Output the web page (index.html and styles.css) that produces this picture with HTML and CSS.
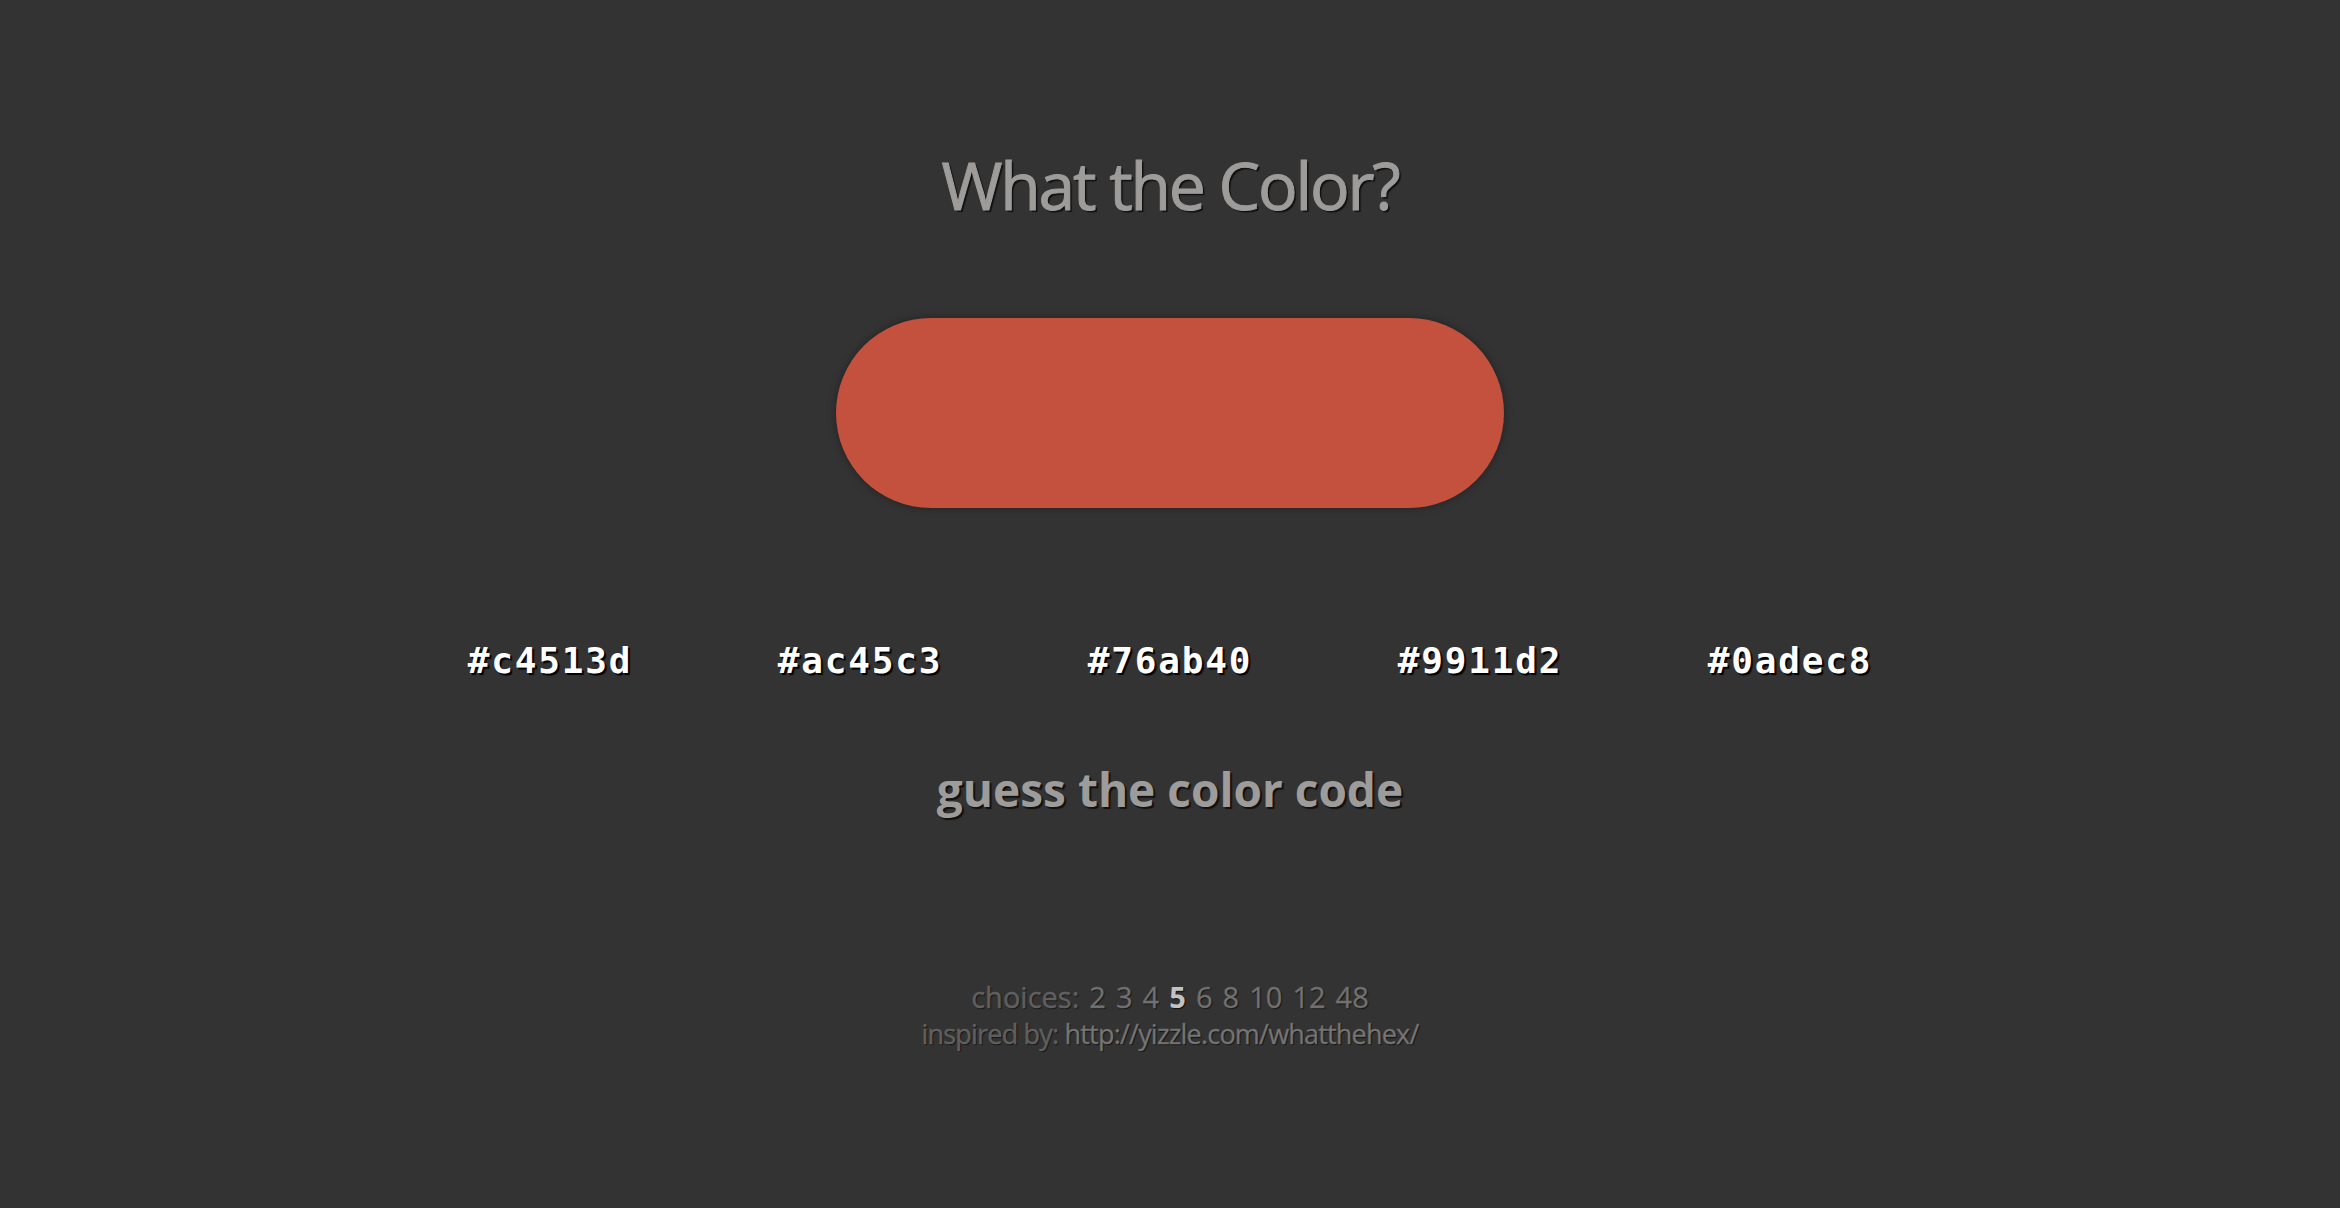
FILE: index.html
```html
<!DOCTYPE html>
<html lang="en">
<head>
<meta charset="utf-8">
<title>What the Color?</title>
<link rel="stylesheet" href="styles.css">
</head>
<body>
<main class="game">
  <h1 class="title">What the Color?</h1>
  <div class="swatch"></div>
  <ul class="choices-row">
    <li class="choice">#c4513d</li>
    <li class="choice">#ac45c3</li>
    <li class="choice">#76ab40</li>
    <li class="choice">#9911d2</li>
    <li class="choice">#0adec8</li>
  </ul>
  <p class="prompt">guess the color code</p>
  <footer class="footer">
    <p class="count-line"><span class="label">choices:</span> <a class="count">2</a> <a class="count">3</a> <a class="count">4</a> <a class="count current">5</a> <a class="count">6</a> <a class="count">8</a> <a class="count">10</a> <a class="count">12</a> <a class="count">48</a></p>
    <p class="credit"><span class="label">inspired by:</span> <a class="credit-link">http://yizzle.com/whatthehex/</a></p>
  </footer>
</main>
</body>
</html>
```

FILE: styles.css
```css
html, body {
  margin: 0;
  padding: 0;
  background: #333333;
}

body {
  font-family: "Open Sans", "DejaVu Sans", sans-serif;
  color: #999;
}

.game {
  display: flex;
  flex-direction: column;
  align-items: center;
  padding-top: 144px;
}

.title {
  margin: 0;
  font-size: 66px;
  line-height: 80px;
  font-weight: 400;
  letter-spacing: -2.2px;
  color: #9e9c9a;
  -webkit-text-stroke: 1px #9e9c9a;
  text-shadow: 2px 2px 1px #111;
}

.swatch {
  margin-top: 94px;
  width: 668px;
  height: 190px;
  border-radius: 95px;
  background: #c4513d;
  box-shadow: 0 0 8px rgba(0, 0, 0, 0.35);
}

.choices-row {
  list-style: none;
  margin: 133px 0 0;
  padding: 0;
  display: flex;
  justify-content: center;
}

.choice {
  width: 310px;
  text-align: center;
  font-family: "DejaVu Sans Mono", "Liberation Mono", monospace;
  font-weight: 700;
  font-size: 36px;
  line-height: 40px;
  letter-spacing: 1.8px;
  color: #ffffff;
  text-shadow: 2px 2px 1px #000;
}

.prompt {
  margin: 80px 0 0;
  font-size: 46px;
  line-height: 56px;
  font-weight: 700;
  color: #9e9c9a;
  text-shadow: 2px 2px 1px #111;
}

.footer {
  margin-top: 161px;
  text-align: center;
  line-height: 37px;
  text-shadow: 1px 1px 1px #111;
}

.footer p {
  margin: 0;
}

.count-line {
  font-size: 29px;
  word-spacing: 2.5px;
  -webkit-text-stroke: 0.4px #666;
}

.credit {
  font-size: 27px;
  letter-spacing: -0.8px;
  -webkit-text-stroke: 0.4px #666;
}

.label {
  color: #5e5e5e;
}

.count {
  color: #727272;
}

.count.current {
  color: #c2c2c2;
  font-weight: 700;
  -webkit-text-stroke: 0;
}

.credit-link {
  color: #777777;
}
```
